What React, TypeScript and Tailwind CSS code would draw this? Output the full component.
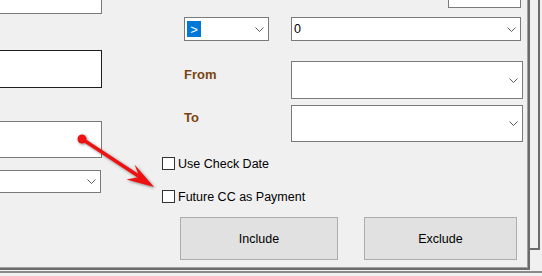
import type { ReactNode } from 'react';

const Chevron = () => (
    <svg width="9" height="5" viewBox="0 0 9 5" className="shrink-0">
        <polyline points="0.5,0.5 4.5,4.5 8.5,0.5" fill="none" stroke="#5b5b5b" strokeWidth="1" />
    </svg>
);

interface ComboProps {
    className?: string;
    children?: ReactNode;
}

const Combo = ({ className = '', children }: ComboProps) => (
    <div className={`flex items-center justify-between bg-white border border-[#7a7a7a] pr-[4px] ${className}`}>
        <div className="flex items-center min-w-0">{children}</div>
        <Chevron />
    </div>
);

const CheckRow = ({ label, className = '' }: { label: string; className?: string }) => (
    <div className={`flex items-center gap-[3px] h-[13px] ${className}`}>
        <div className="w-[13px] h-[13px] shrink-0 bg-white border border-[#333333]" />
        <span className="text-[12.5px] leading-[14px] text-black whitespace-nowrap">{label}</span>
    </div>
);

const App = () => {
    return (
        <div className="relative w-[542px] h-[276px] overflow-hidden bg-[#f0f0f0] font-['Liberation_Sans',Arial,sans-serif]">
            <div className="flex items-start">
                {/* main panel */}
                <div className="w-[530px] h-[270px] border-r-2 border-b-2 border-[#6b6b6b] flex">
                    <div className="flex-1 flex border-r border-b border-[#a0a0a0] overflow-hidden">
                        {/* left column, cut off */}
                        <div className="flex flex-col w-[102px] shrink-0">
                            <div className="-mt-[10px] h-[24px] bg-white border border-l-0 border-[#7a7a7a]" />
                            <div className="mt-[36px] h-[38px] bg-white border border-l-0 border-[#1e1e1e]" />
                            <div className="mt-[33px] h-[37px] bg-white border border-l-0 border-[#7a7a7a]" />
                            <Combo className="mt-[12px] h-[23px] w-[101px] border-l-0" />
                        </div>

                        {/* filter area */}
                        <div className="ml-[60px] flex flex-col w-[365px] shrink-0">
                            <div className="-mt-[12px] ml-[286px] w-[73px] h-[20px] bg-white border border-[#7a7a7a]" />

                            <div className="mt-[9px] flex">
                                <Combo className="ml-[22px] w-[85px] h-[24px] pl-[2px]">
                                    <div className="w-[14px] h-[16px] bg-[#0078d7] flex items-center justify-center text-white text-[13px] leading-none font-light">
                                        &gt;
                                    </div>
                                </Combo>
                                <Combo className="ml-[22px] w-[230px] h-[24px] pl-[2px]">
                                    <span className="text-[12.5px] leading-none text-black">0</span>
                                </Combo>
                            </div>

                            <div className="mt-[20px] flex h-[38px]">
                                <div className="ml-[22px] w-[107px] pt-[6px] text-[13px] leading-[15px] font-bold text-[#7a4612]">From</div>
                                <Combo className="w-[232px] h-[38px]" />
                            </div>

                            <div className="mt-[6px] flex h-[37px]">
                                <div className="ml-[22px] w-[107px] pt-[5px] text-[13px] leading-[15px] font-bold text-[#7a4612]">To</div>
                                <Combo className="w-[232px] h-[37px]" />
                            </div>

                            <CheckRow label="Use Check Date" className="mt-[15px]" />
                            <CheckRow label="Future CC as Payment" className="mt-[20px]" />

                            <div className="mt-[14px] flex">
                                <button className="ml-[18px] w-[158px] h-[43px] pt-[2px] bg-[#e1e1e1] border border-[#adadad] text-[12.5px] text-black">
                                    Include
                                </button>
                                <button className="ml-[26px] w-[153px] h-[43px] pt-[2px] bg-[#e1e1e1] border border-[#adadad] text-[12.5px] text-black">
                                    Exclude
                                </button>
                            </div>
                        </div>
                    </div>
                </div>

                {/* neighbouring frame edge */}
                <div className="w-[10px] h-[250px] border-r-2 border-b-2 border-[#6b6b6b]" />
            </div>
            <div className="mt-[1px] h-[2px] bg-[#8a8a8a]" />

            {/* red annotation arrow */}
            <svg
                className="absolute left-0 top-0 pointer-events-none"
                width="542"
                height="276"
                viewBox="0 0 542 276"
                style={{ filter: 'drop-shadow(1px 1px 1.5px rgba(0,0,0,0.45))' }}
            >
                <line x1="82" y1="139" x2="140" y2="177" stroke="#ee1111" strokeWidth="3.5" strokeLinecap="round" />
                <circle cx="82" cy="139" r="4.5" fill="#ee1111" />
                <polygon points="154,187 134.5,164.5 139.5,177 126.5,179.5" fill="#ee1111" />
            </svg>
        </div>
    );
};

export default App;
